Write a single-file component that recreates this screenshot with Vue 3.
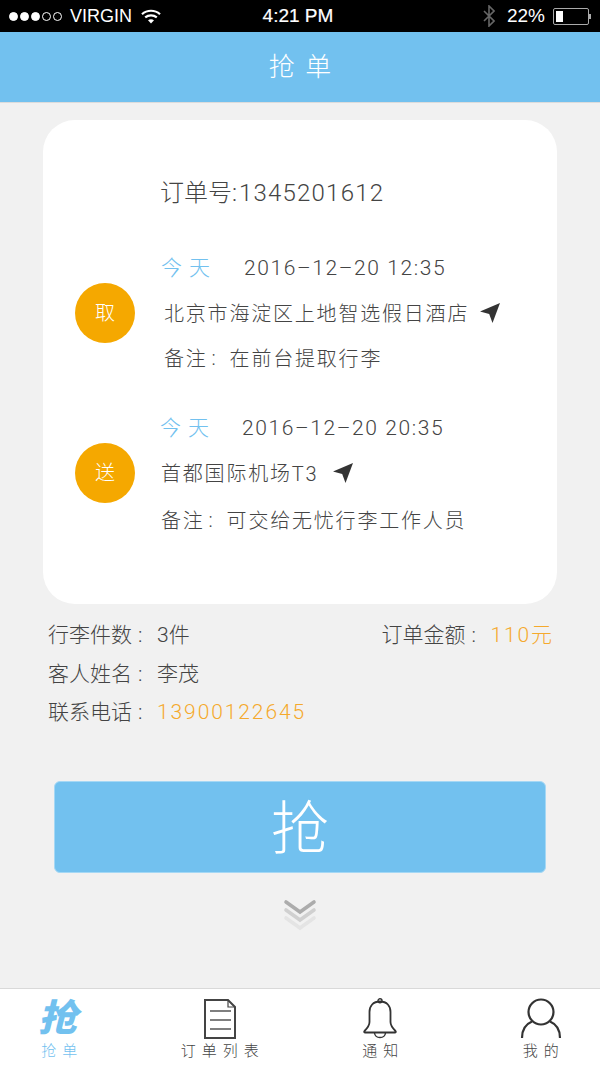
<template>
  <div class="page">
    <!-- 状态栏 -->
    <div class="status-bar">
      <div class="status-left">
        <span class="dot on"></span><span class="dot on"></span><span class="dot on"></span><span class="dot"></span><span class="dot"></span>
        <span class="carrier">VIRGIN</span>
        <svg class="wifi" width="20" height="15" viewBox="0 0 20 15">
          <path d="M1 5.2C6 .6 14 .6 19 5.2" fill="none" stroke="#fff" stroke-width="2.2"/>
          <path d="M4.2 8.4c3.3-2.8 8.3-2.8 11.6 0" fill="none" stroke="#fff" stroke-width="2.2"/>
          <path d="M7 11.2c1.8-1.3 4.2-1.3 6 0L10 14.4z" fill="#fff"/>
        </svg>
      </div>
      <div class="status-time">4:21 PM</div>
      <div class="status-right">
        <svg class="bt" width="12" height="22" viewBox="0 0 12 22">
          <path d="M1 6l10 10-5 5V1l5 5L1 16" fill="none" stroke="#666" stroke-width="1.6"/>
        </svg>
        <span class="percent">22%</span>
        <span class="battery"><span class="battery-fill"></span></span>
        <span class="battery-tip"></span>
      </div>
    </div>

    <div class="header">抢 单</div>

    <div class="main">
      <div class="card">
        <div class="order-no">订单号:<span class="order-num">1345201612</span></div>

        <div class="stop">
          <div class="badge">取</div>
          <div class="stop-body">
            <div class="row when"><span class="today">今天</span><span class="date first">2016–12–20 12:35</span></div>
            <div class="row indent">北京市海淀区上地智选假日酒店
              <svg class="nav" width="22" height="22" viewBox="0 0 22 22"><path d="M21 1L1 9.5l9.2 2.4L13.5 21z" fill="#333"/></svg>
            </div>
            <div class="row indent">备注<span class="colon">:</span>在前台提取行李</div>
          </div>
        </div>

        <div class="stop second">
          <div class="badge">送</div>
          <div class="stop-body">
            <div class="row when"><span class="today shift">今天</span><span class="date">2016–12–20 20:35</span></div>
            <div class="row">首都国际机场T3
              <svg class="nav far" width="22" height="22" viewBox="0 0 22 22"><path d="M21 1L1 9.5l9.2 2.4L13.5 21z" fill="#333"/></svg>
            </div>
            <div class="row last">备注<span class="colon">:</span>可交给无忧行李工作人员</div>
          </div>
        </div>
      </div>

      <div class="info">
        <div class="info-row">
          <span>行李件数<span class="colon">:</span>3件</span>
          <span>订单金额<span class="colon">:</span><em>110元</em></span>
        </div>
        <div class="info-row"><span>客人姓名<span class="colon">:</span>李茂</span></div>
        <div class="info-row"><span>联系电话<span class="colon">:</span><em>13900122645</em></span></div>
      </div>

      <div class="grab-btn">抢</div>

      <svg class="more" width="34" height="38" viewBox="0 0 34 38">
        <path d="M3 25l14 10 14-10" fill="none" stroke="#e4e4e4" stroke-width="3.6" stroke-linecap="round"/>
        <path d="M3 17l14 10 14-10" fill="none" stroke="#d0d0d0" stroke-width="3.6" stroke-linecap="round"/>
        <path d="M3 9l14 10 14-10" fill="none" stroke="#acacac" stroke-width="3.6" stroke-linecap="round"/>
      </svg>
    </div>

    <div class="tabbar">
      <div v-for="t in tabs" :key="t.label" class="tab" :class="{ active: t.active }">
        <div class="tab-icon">
          <span v-if="t.key === 'grab'" class="grab-glyph">抢</span>
          <svg v-else-if="t.key === 'list'" width="34" height="42" viewBox="0 0 34 42">
            <path d="M2 2h23l7 7v31H2z" fill="none" stroke="#444" stroke-width="2"/>
            <path d="M25 2v7h7" fill="none" stroke="#444" stroke-width="1.2"/>
            <path d="M7 13h21M7 22h21M7 31h21" stroke="#555" stroke-width="1.5"/>
          </svg>
          <svg v-else-if="t.key === 'bell'" width="34" height="42" viewBox="0 0 34 42">
            <path d="M17 3.500c-7 0-10.500 4.500-10.500 10.500v10c0 4-2.500 6.500-5 9-.7.800-.2 1.500.6 1.500h29.800c.8 0 1.300-.7.6-1.500-2.500-2.500-5-5-5-9V14c0-6-3.500-10.500-10.500-10.500z" fill="none" stroke="#333" stroke-width="1.800"/>
            <circle cx="17" cy="2.800" r="2" fill="none" stroke="#333" stroke-width="1.400"/>
            <path d="M11.500 35c.8 6 10.200 6 11 0" fill="none" stroke="#333" stroke-width="1.400"/>
          </svg>
          <svg v-else width="42" height="42" viewBox="0 0 42 42">
            <circle cx="21" cy="14" r="12.500" fill="none" stroke="#333" stroke-width="2.200"/>
            <path d="M2 40c0-9 4-14 10-16.500M40 40c0-9-4-14-10-16.500" fill="none" stroke="#333" stroke-width="2.200"/>
          </svg>
        </div>
        <div class="tab-label">{{ t.label }}</div>
      </div>
    </div>
  </div>
</template>

<script setup>
const tabs = [
  { key: 'grab', label: '抢单', active: true },
  { key: 'list', label: '订单列表' },
  { key: 'bell', label: '通知' },
  { key: 'me', label: '我的' }
]
</script>

<style>
html, body {
  margin: 0;
  background: #f1f1f1;
}
</style>

<style scoped>
.page {
  height: 1067px;
  display: flex;
  flex-direction: column;
  background: #f1f1f1;
  font-family: Roboto, "Noto Sans CJK SC", sans-serif;
  font-weight: 300;
  color: #444;
  overflow: hidden;
}

.status-bar {
  height: 32px;
  background: #000;
  color: #fff;
  display: grid;
  grid-template-columns: 1fr auto 1fr;
  align-items: center;
  font-family: "Liberation Sans", sans-serif;
  font-weight: 400;
  font-size: 18px;
}

.status-left {
  display: flex;
  align-items: center;
  padding-left: 9px;
}

.dot {
  box-sizing: border-box;
  width: 9px;
  height: 9px;
  margin-right: 2px;
  border-radius: 50%;
  border: 1px solid #fff;
}

.dot.on {
  background: #fff;
}

.carrier {
  margin-left: 6px;
}

.wifi {
  margin-left: 9px;
}

.status-time {
  margin-right: 4px;
  font-size: 19px;
  -webkit-text-stroke: 0.2px #fff;
}

.status-right {
  display: flex;
  align-items: center;
  justify-content: flex-end;
  padding-right: 9px;
}

.percent {
  margin-left: 12px;
  font-size: 19px;
}

.battery {
  box-sizing: border-box;
  width: 36px;
  height: 17px;
  margin-left: 8px;
  padding: 2px;
  border: 1px solid #aaa;
  border-radius: 2px;
  display: flex;
}

.battery-fill {
  width: 7px;
  background: #fff;
}

.battery-tip {
  width: 2px;
  height: 5px;
  background: #aaa;
}

.header {
  height: 70px;
  padding-left: 2px;
  line-height: 71px;
  background: #72c1ef;
  border-bottom: 1px solid #dcdcdc;
  color: #fff;
  text-align: center;
  font-size: 26px;
  letter-spacing: 2px;
}

.main {
  flex: 1;
  display: flex;
  flex-direction: column;
}

.card {
  margin: 17px 43px 0;
  height: 484px;
  box-sizing: border-box;
  padding: 56px 32px 0;
  background: #fff;
  border-radius: 32px;
}

.order-no {
  margin-left: 85px;
  height: 34px;
  line-height: 34px;
  font-size: 24px;
  white-space: nowrap;
}

.order-num {
  margin-left: 2px;
  letter-spacing: 1.2px;
}

.stop {
  margin-top: 35px;
  display: flex;
  align-items: center;
  gap: 26px;
}

.stop.second {
  margin-top: 25px;
}

.badge {
  flex: none;
  width: 60px;
  height: 60px;
  line-height: 60px;
  border-radius: 50%;
  background: #f5a800;
  color: #fff;
  text-align: center;
  font-size: 20px;
}

.stop-body {
  flex: 1;
  white-space: nowrap;
}

.row {
  height: 45px;
  display: flex;
  align-items: center;
  font-size: 20px;
  letter-spacing: 1.8px;
}

.row.last {
  margin-top: 2px;
  margin-bottom: -2px;
}

.row.indent {
  padding-left: 3px;
}

.colon {
  display: inline-block;
  box-sizing: border-box;
  width: 22px;
  padding-left: 4px;
  letter-spacing: 0;
}

.info .colon {
  width: 25px;
  padding-left: 6px;
}

.today {
  margin-bottom: 3px;
  font-size: 21px;
  letter-spacing: 7px;
  color: #72c1ef;
}

.today.shift {
  margin-left: -1px;
}

.date {
  margin-left: 26px;
  font-size: 21px;
  letter-spacing: 1.6px;
}

.date.first {
  margin-left: 27px;
}

.nav {
  margin-left: 10px;
}

.nav.far {
  margin-left: 14px;
}

.info {
  margin: 10px 46px 0 48px;
  font-size: 21px;
}

.info-row {
  height: 38.500px;
  display: flex;
  align-items: center;
  justify-content: space-between;
  white-space: nowrap;
}

.info em {
  font-style: normal;
  letter-spacing: 1.9px;
  color: #f5a92c;
}

.grab-btn {
  margin: 51px 54px 0;
  height: 92px;
  line-height: 94px;
  box-sizing: border-box;
  background: #72c1ef;
  border: 1px solid #a5d8f5;
  border-radius: 6px;
  color: #fff;
  text-align: center;
  font-size: 58px;
}

.more {
  align-self: center;
  margin-top: 20px;
}

.tabbar {
  height: 79px;
  margin: 0 -21px;
  box-sizing: border-box;
  display: grid;
  grid-template-columns: repeat(4, 1fr);
  border-top: 1px solid #d9d9d9;
  background: #fff;
}

.tab {
  display: flex;
  flex-direction: column;
  align-items: center;
  color: #444;
}

.tab.active {
  color: #72c1ef;
}

.tab-icon {
  height: 42px;
  margin-top: 9px;
  display: flex;
  align-items: center;
  justify-content: center;
}

.grab-glyph {
  margin-left: 3px;
  font-size: 37px;
  font-weight: 900;
  line-height: 42px;
  color: #72c1ef;
  transform: skewX(-14deg) scaleX(1.06);
}

.tab-label {
  margin-right: -6px;
  font-size: 15px;
  letter-spacing: 6px;
  line-height: 22px;
  white-space: nowrap;
}
</style>
